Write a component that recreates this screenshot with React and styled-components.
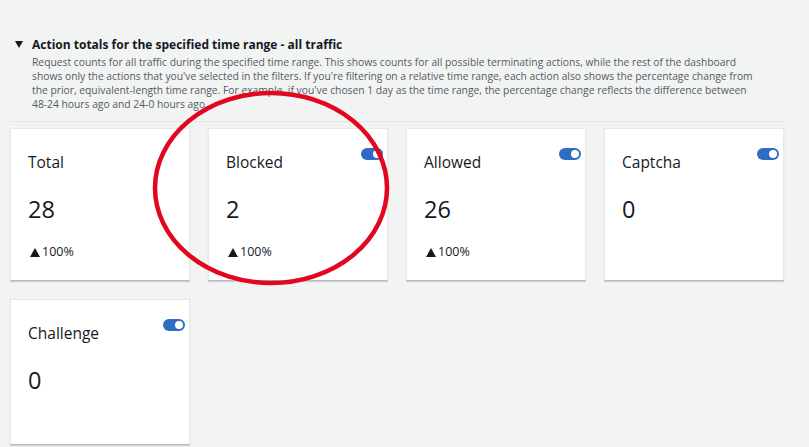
import styled, { createGlobalStyle } from "styled-components";

const GlobalStyle = createGlobalStyle`
  body {
    margin: 0;
    background: #f2f3f3;
    font-family: "Open Sans", "Noto Sans", sans-serif;
    color: #16191f;
  }
`;

const Page = styled.div`
  position: relative;
  width: 809px;
  height: 447px;
  overflow: hidden;
  padding: 36px 0 0 10px;
  box-sizing: border-box;
`;

const Section = styled.section`
  width: 774px;
`;

const Header = styled.div`
  display: flex;
  align-items: flex-start;
  padding: 0 0 10px 5px;
  border-bottom: 1px solid #e4e6e7;
`;

const Caret = styled.span`
  width: 0;
  height: 0;
  margin: 5px 9px 0 0;
  border-left: 4px solid transparent;
  border-right: 4px solid transparent;
  border-top: 7px solid #16191f;
  flex-shrink: 0;
`;

const HeaderText = styled.div`
  display: flex;
  flex-direction: column;
  gap: 2px;
`;

const Title = styled.h2`
  margin: 0;
  font-size: 12px;
  line-height: 17px;
  font-weight: 700;
  color: #16191f;
`;

const Description = styled.p`
  margin: 0;
  font-size: 10.3px;
  line-height: 14px;
  color: #545b64;
  white-space: nowrap;
`;

const Grid = styled.div`
  display: grid;
  grid-template-columns: repeat(4, 180px);
  column-gap: 18px;
  row-gap: 18px;
  margin-top: 6px;
`;

const Card = styled.div`
  min-height: 146px;
  box-sizing: border-box;
  background: #fff;
  border: 1px solid #e7e9ea;
  border-bottom: 1px solid #b7bbbf;
  box-shadow: 0 1px 1px rgba(0, 28, 36, 0.15);
  padding: 19px 4px 20px 17px;
  display: flex;
  flex-direction: column;
`;

const CardHead = styled.div`
  display: flex;
  justify-content: space-between;
  align-items: flex-start;
`;

const CardTitle = styled.div`
  margin-top: 4px;
  font-size: 15.5px;
  line-height: 20px;
  color: #16191f;
`;

const Toggle = styled.span`
  position: relative;
  width: 22px;
  height: 12px;
  border-radius: 6px;
  background: ${(p) => (p.$on ? "#2f6dc5" : "#aab7b8")};

  &::after {
    content: "";
    position: absolute;
    top: 2px;
    ${(p) => (p.$on ? "right: 2px;" : "left: 2px;")}
    width: 8px;
    height: 8px;
    border-radius: 50%;
    background: #fff;
  }
`;

const Value = styled.div`
  margin-top: 22px;
  font-size: 23.5px;
  line-height: 30px;
  color: #16191f;
`;

const Change = styled.div`
  margin-top: 20px;
  padding-left: 2px;
  display: flex;
  align-items: center;
  gap: 2px;
  font-size: 12.5px;
  line-height: 16px;
  color: #16191f;
`;

const Arrow = styled.span`
  width: 0;
  height: 0;
  border-left: 5.5px solid transparent;
  border-right: 5.5px solid transparent;
  border-bottom: 9px solid #16191f;
`;

const Highlight = styled.svg`
  position: absolute;
  left: 0;
  top: 0;
  pointer-events: none;
`;

const cards = [
  { title: "Total", value: "28", change: "100%", toggle: false },
  { title: "Blocked", value: "2", change: "100%", toggle: true },
  { title: "Allowed", value: "26", change: "100%", toggle: true },
  { title: "Captcha", value: "0", toggle: true },
  { title: "Challenge", value: "0", toggle: true },
];

export default function App() {
  return (
    <>
      <GlobalStyle />
      <Page>
        <Section>
          <Header>
            <Caret />
            <HeaderText>
              <Title>Action totals for the specified time range - all traffic</Title>
              <Description>
                Request counts for all traffic during the specified time range. This shows counts for all possible terminating actions, while the rest of the dashboard
                <br />
                shows only the actions that you've selected in the filters. If you're filtering on a relative time range, each action also shows the percentage change from
                <br />
                the prior, equivalent-length time range. For example, if you've chosen 1 day as the time range, the percentage change reflects the difference between
                <br />
                48-24 hours ago and 24-0 hours ago.
              </Description>
            </HeaderText>
          </Header>
          <Grid>
            {cards.map((c) => (
              <Card key={c.title}>
                <CardHead>
                  <CardTitle>{c.title}</CardTitle>
                  {c.toggle && <Toggle $on />}
                </CardHead>
                <Value>{c.value}</Value>
                {c.change && (
                  <Change>
                    <Arrow />
                    {c.change}
                  </Change>
                )}
              </Card>
            ))}
          </Grid>
        </Section>
        <Highlight width="809" height="447">
          <ellipse cx="271" cy="188" rx="116" ry="95" fill="none" stroke="#e3061f" strokeWidth="4.5" />
        </Highlight>
      </Page>
    </>
  );
}
